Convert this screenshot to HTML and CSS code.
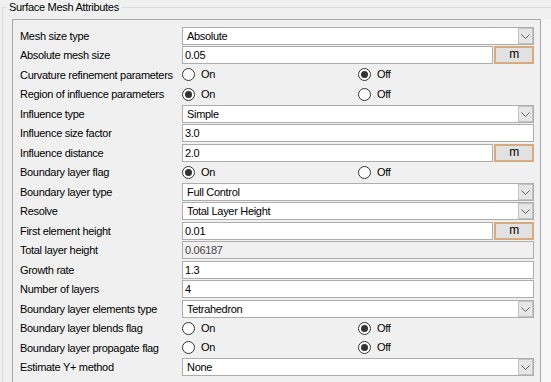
FILE: index.html
```html
<!DOCTYPE html>
<html lang="en">
<head>
    <meta charset="UTF-8">
    <meta name="viewport" content="width=device-width, initial-scale=1.0">
    <title>Surface Mesh Attributes</title>
    <link rel="stylesheet" href="styles.css">
</head>
<body>
    <fieldset class="grupo">
        <legend>Surface Mesh Attributes</legend>

        <div class="marco">
            <div class="panel">
                <span class="etiqueta">Mesh size type</span>
                <div class="combo"><span class="valor">Absolute</span><span class="flecha"><svg width="9" height="5" viewBox="0 0 9 5"><polyline points="0.5,0.5 4.5,4.5 8.5,0.5" fill="none" stroke="#606060" stroke-width="1"/></svg></span></div>

                <span class="etiqueta">Absolute mesh size</span>
                <div class="conUnidad"><span class="campo">0.05</span><span class="unidad">m</span></div>

                <span class="etiqueta">Curvature refinement parameters</span>
                <div class="opciones">
                    <span class="opcion"><span class="radio"></span>On</span>
                    <span class="opcion"><span class="radio marcado"></span>Off</span>
                </div>

                <span class="etiqueta">Region of influence parameters</span>
                <div class="opciones">
                    <span class="opcion"><span class="radio marcado"></span>On</span>
                    <span class="opcion"><span class="radio"></span>Off</span>
                </div>

                <span class="etiqueta">Influence type</span>
                <div class="combo"><span class="valor">Simple</span><span class="flecha"><svg width="9" height="5" viewBox="0 0 9 5"><polyline points="0.5,0.5 4.5,4.5 8.5,0.5" fill="none" stroke="#606060" stroke-width="1"/></svg></span></div>

                <span class="etiqueta">Influence size factor</span>
                <span class="campo">3.0</span>

                <span class="etiqueta">Influence distance</span>
                <div class="conUnidad"><span class="campo">2.0</span><span class="unidad">m</span></div>

                <span class="etiqueta">Boundary layer flag</span>
                <div class="opciones">
                    <span class="opcion"><span class="radio marcado"></span>On</span>
                    <span class="opcion"><span class="radio"></span>Off</span>
                </div>

                <span class="etiqueta">Boundary layer type</span>
                <div class="combo"><span class="valor">Full Control</span><span class="flecha"><svg width="9" height="5" viewBox="0 0 9 5"><polyline points="0.5,0.5 4.5,4.5 8.5,0.5" fill="none" stroke="#606060" stroke-width="1"/></svg></span></div>

                <span class="etiqueta">Resolve</span>
                <div class="combo"><span class="valor">Total Layer Height</span><span class="flecha"><svg width="9" height="5" viewBox="0 0 9 5"><polyline points="0.5,0.5 4.5,4.5 8.5,0.5" fill="none" stroke="#606060" stroke-width="1"/></svg></span></div>

                <span class="etiqueta">First element height</span>
                <div class="conUnidad"><span class="campo">0.01</span><span class="unidad">m</span></div>

                <span class="etiqueta">Total layer height</span>
                <span class="campo inactivo">0.06187</span>

                <span class="etiqueta">Growth rate</span>
                <span class="campo">1.3</span>

                <span class="etiqueta">Number of layers</span>
                <span class="campo">4</span>

                <span class="etiqueta">Boundary layer elements type</span>
                <div class="combo"><span class="valor">Tetrahedron</span><span class="flecha"><svg width="9" height="5" viewBox="0 0 9 5"><polyline points="0.5,0.5 4.5,4.5 8.5,0.5" fill="none" stroke="#606060" stroke-width="1"/></svg></span></div>

                <span class="etiqueta">Boundary layer blends flag</span>
                <div class="opciones">
                    <span class="opcion"><span class="radio"></span>On</span>
                    <span class="opcion"><span class="radio marcado"></span>Off</span>
                </div>

                <span class="etiqueta">Boundary layer propagate flag</span>
                <div class="opciones">
                    <span class="opcion"><span class="radio"></span>On</span>
                    <span class="opcion"><span class="radio marcado"></span>Off</span>
                </div>

                <span class="etiqueta">Estimate Y+ method</span>
                <div class="combo"><span class="valor">None</span><span class="flecha"><svg width="9" height="5" viewBox="0 0 9 5"><polyline points="0.5,0.5 4.5,4.5 8.5,0.5" fill="none" stroke="#606060" stroke-width="1"/></svg></span></div>
            </div>
            <div class="barra"></div>
        </div>
    </fieldset>
</body>
</html>
```

FILE: styles.css
```css
body {
    margin: 0;
    background-color: #f0f0f0;
    font-family: "Liberation Sans", Arial, sans-serif;
    font-size: 11px;
    letter-spacing: -0.3px;
    color: #000000;
    height: 382px;
    overflow: hidden;
}

/* Caja de grupo exterior */
.grupo {
    margin: 0 0 0 2px;
    padding: 0 0 0 9px;
    border: 1px solid #dcdcdc;
    border-right: none;
    border-bottom: none;
    min-width: 0;
}

.grupo legend {
    padding: 0 3px 0 2px;
    margin-left: -5px;
    line-height: 15px;
}

.marco {
    display: flex;
    margin-top: 4px;
}

.panel {
    flex: 1;
    display: grid;
    grid-template-columns: 162px 1fr;
    grid-auto-rows: 19.5px;
    align-items: center;
    align-content: start;
    padding: 6px 6px 0 7px;
    border: 1px solid #a8a8a8;
    border-bottom: none;
    height: 356px;
}

.barra {
    width: 10px;
    background: #f7f7f7;
}

.etiqueta {
    white-space: nowrap;
}

/* Campos de texto */
.campo {
    display: block;
    height: 18px;
    box-sizing: border-box;
    border: 1px solid #adadad;
    background: #ffffff;
    padding: 0 2px;
    line-height: 16px;
}

.inactivo {
    background: #f0f0f0;
    color: #444444;
}

.conUnidad {
    display: flex;
    gap: 1px;
}

.conUnidad .campo {
    flex: 1;
}

.unidad {
    width: 40px;
    height: 18px;
    box-sizing: border-box;
    border: 1px solid #f5a24c;
    box-shadow: inset 0 0 0 1px #b4b4b4;
    background: #e1e1e1;
    text-align: center;
    line-height: 15px;
    font-size: 12px;
}

/* Listas desplegables */
.combo {
    display: flex;
    height: 18px;
    box-sizing: border-box;
    border: 1px solid #adadad;
    background: #ffffff;
}

.valor {
    flex: 1;
    padding-left: 4px;
    line-height: 16px;
}

.flecha {
    width: 15px;
    box-sizing: border-box;
    border: 1px solid #c4c4c4;
    background: #e6e6e6;
    display: flex;
    justify-content: center;
    align-items: center;
    padding-top: 1px;
}

/* Botones de opción */
.opciones {
    display: grid;
    grid-template-columns: 176px auto;
}

.opcion {
    display: flex;
    align-items: center;
    gap: 6px;
    line-height: 13px;
}

.radio {
    width: 13px;
    height: 13px;
    box-sizing: border-box;
    border: 1px solid #333333;
    border-radius: 50%;
    background: #ffffff;
    display: flex;
    justify-content: center;
    align-items: center;
}

.marcado::after {
    content: "";
    width: 7px;
    height: 7px;
    border-radius: 50%;
    background: #333333;
}
```
